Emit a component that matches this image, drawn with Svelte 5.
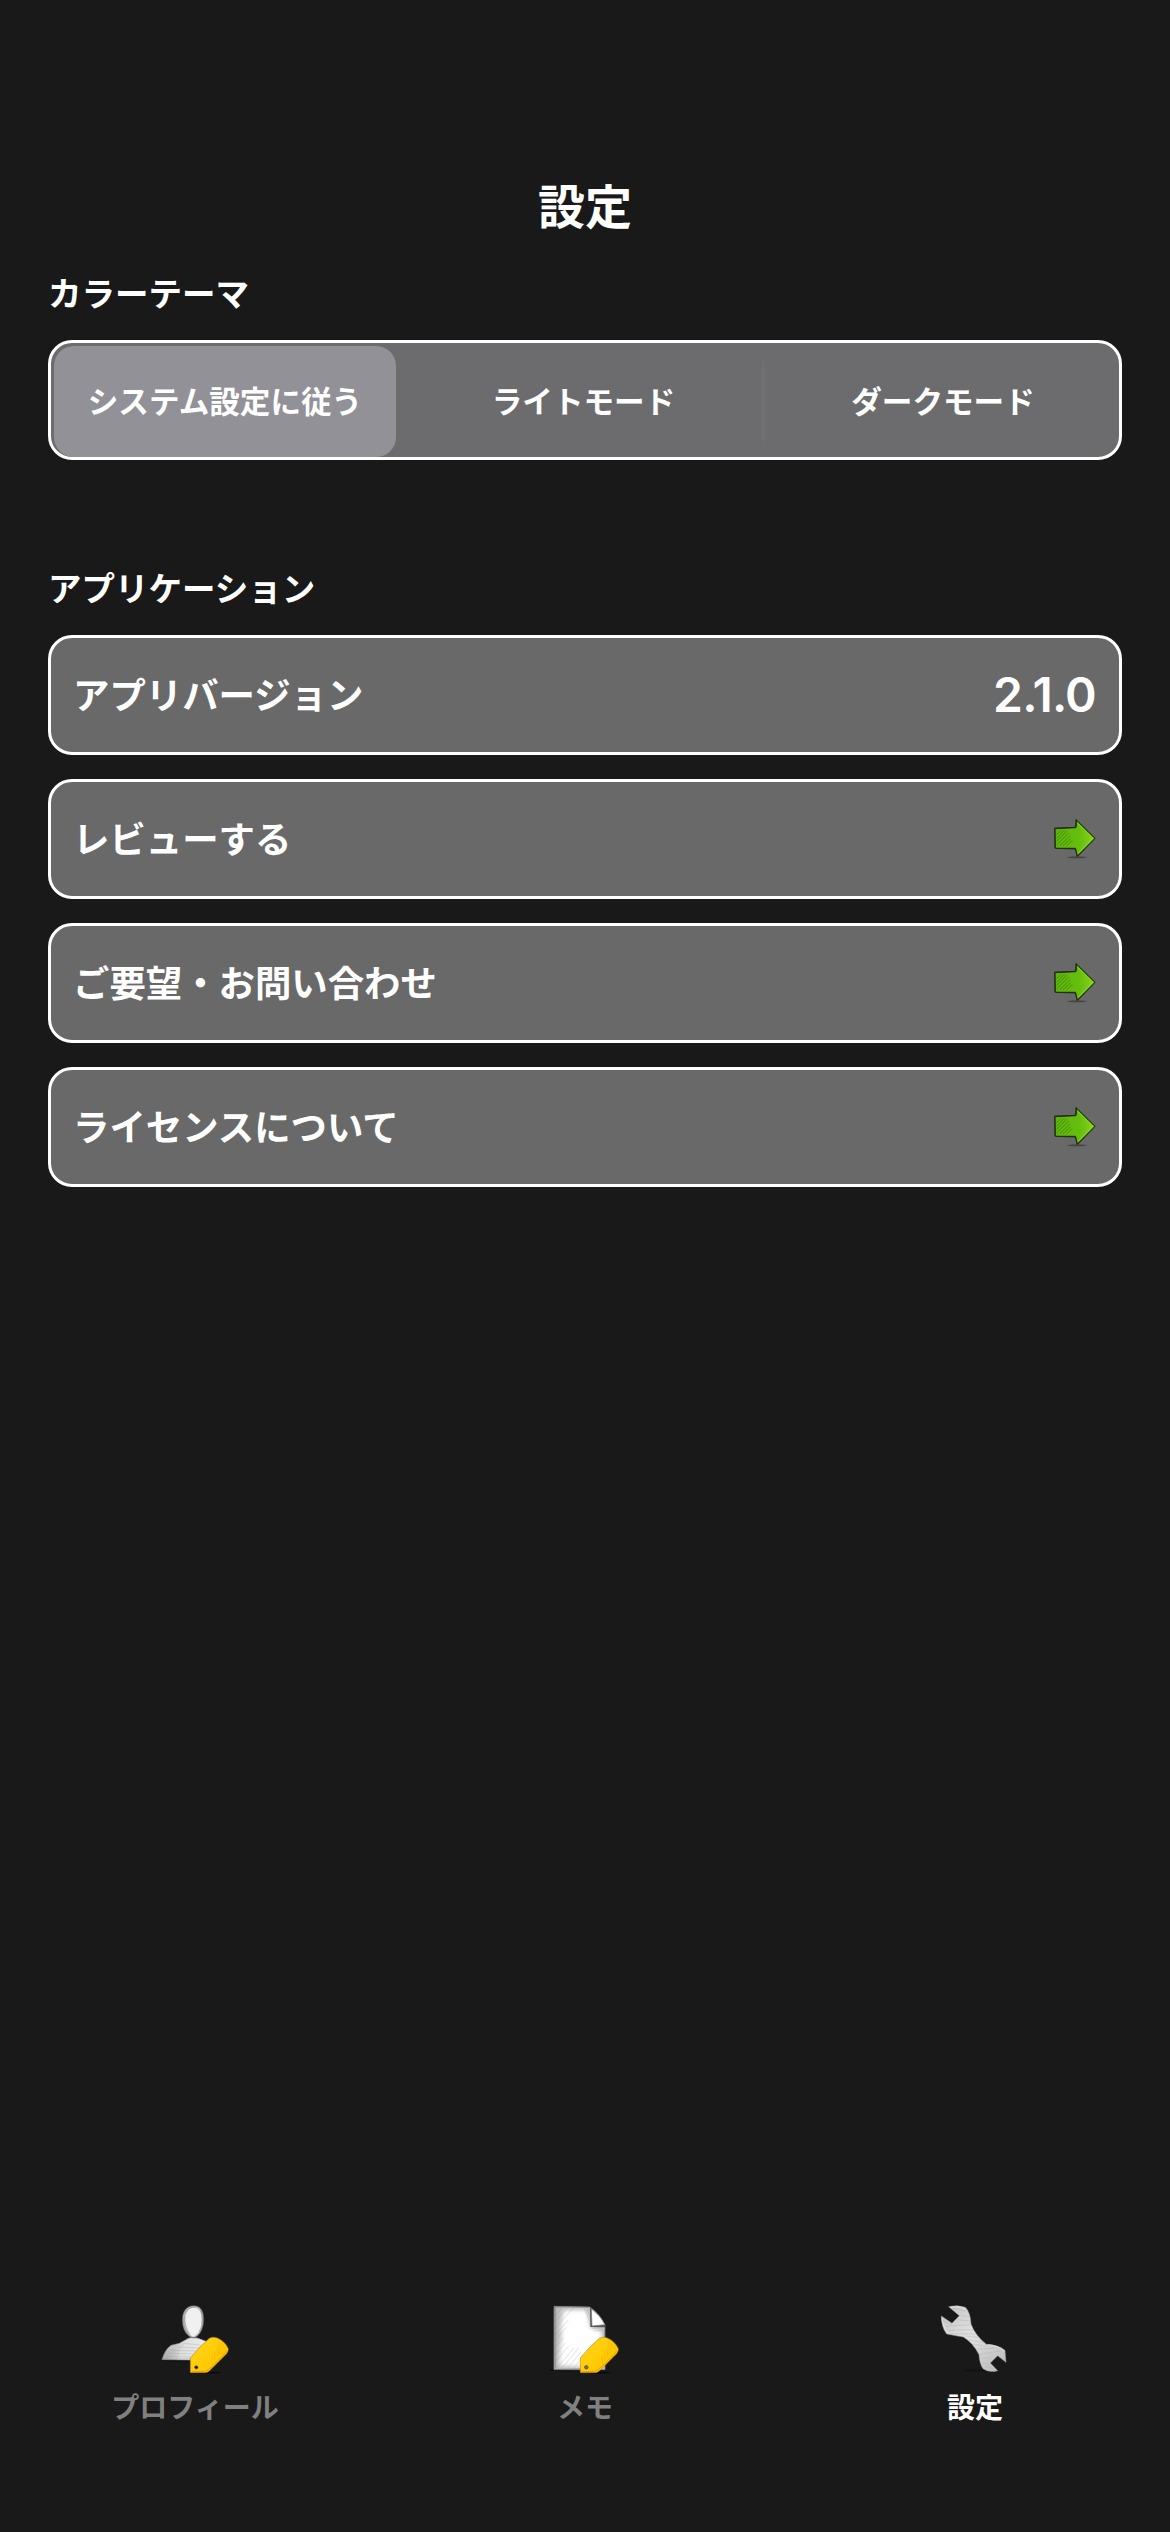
<script>
  const modes = ['システム設定に従う', 'ライトモード', 'ダークモード'];
  const links = ['レビューする', 'ご要望・お問い合わせ', 'ライセンスについて'];
  let selected = $state(0);
</script>

{#snippet tag()}
  <ellipse cx="165" cy="248" rx="48" ry="3" fill="#080808" />
  <path d="M121 204 Q148 170 178 145 Q187 139 200 143 Q225 153 235 176 Q236 184 230 191 L178 243 Q172 248 166 248 L121 248 Z" fill="url(#tagFill)" stroke="#a87508" stroke-width="1.5" />
  <path d="M125 245 L164 244 Q174 242 185 230 L231 184" fill="none" stroke="#e98c08" stroke-width="3" opacity=".75" />
  <g stroke="#e5a900" stroke-width="1.5" opacity=".7">
    <path d="M207 151 v42 M213 155 v39 M219 159 v34 M225 166 v25 M202 172 v31 M194 184 v28 M187 196 v26" />
  </g>
{/snippet}

<div class="screen">
  <header><h1>設定</h1></header>
  <main>
    <section class="theme">
      <h2>カラーテーマ</h2>
      <div class="segments">
        {#each modes as mode, i}
          <button class:selected={selected === i} class:divided={i === 2} onclick={() => (selected = i)}><span>{mode}</span></button>
        {/each}
      </div>
    </section>
    <section>
      <h2>アプリケーション</h2>
      <div class="rows">
        <div class="row"><span class="label">アプリバージョン</span><span class="version">2.1.0</span></div>
        {#each links as link}
          <div class="row">
            <span class="label">{link}</span>
            <svg class="arrow" viewBox="39 54 126 126">
              <ellipse cx="108" cy="172" rx="29" ry="3" fill="#333" opacity=".65" />
              <path d="M42 86 L103 83 L105 59 L162 115 L109 169 L103 145 L43 144 Z" fill="url(#arrowFill)" stroke="#253b13" stroke-width="3.5" stroke-linejoin="round" />
              <path d="M40 84 L104 82 M41 85 L42 145 M43 145 L103 147 M106 59 L107 82 M104 146 L108 168 M110 168 L133 146" fill="none" stroke="#20291a" stroke-width="3" opacity=".85" />
              <path d="M46 105 L62 89 M46 115 L71 90 M46 125 L78 93 M47 135 L83 99 M56 138 L88 106 M66 138 L88 116 M77 138 L93 122" stroke="#2c6a08" stroke-width="1.8" opacity=".75" />
              <path d="M110 70 L155 114 L113 158" fill="none" stroke="#8ed431" stroke-width="3" opacity=".8" />
            </svg>
          </div>
        {/each}
      </div>
    </section>
  </main>
  <nav>
    <div class="tab">
      <svg class="icon" viewBox="0 0 270 270">
        <defs>
          <filter id="soft" x="-20%" y="-20%" width="140%" height="140%"><feGaussianBlur stdDeviation="6" /></filter>
          <linearGradient id="tagFill" x1="0" y1="0" x2="1" y2="1">
            <stop offset="0" stop-color="#ffd51d" /><stop offset=".7" stop-color="#ffc900" /><stop offset="1" stop-color="#e99000" />
          </linearGradient>
          <linearGradient id="arrowFill">
            <stop offset="0" stop-color="#5db50c" /><stop offset=".6" stop-color="#66be0c" /><stop offset="1" stop-color="#86d421" />
          </linearGradient>
          <linearGradient id="bodyFill">
            <stop offset="0" stop-color="#aaa" /><stop offset=".4" stop-color="#dedede" /><stop offset="1" stop-color="#ededed" />
          </linearGradient>
          <linearGradient id="steel" x1="0" y1="0" x2="1" y2="1">
            <stop offset="0" stop-color="#c4c4c4" /><stop offset=".45" stop-color="#e0e0e0" /><stop offset="1" stop-color="#b9b9b9" />
          </linearGradient>
        </defs>
        <ellipse cx="90" cy="211" rx="58" ry="4" fill="#0c0c0c" />
        <path d="M36 209 Q45 178 63 166 L88 160 L115 145 Q128 139 145 145 L174 156 L174 211 Z" fill="url(#bodyFill)" stroke="#828282" stroke-width="2" />
        <path d="M44 207 L79 164 M51 207 L88 163 M60 207 L96 161 M69 207 L105 158 M78 207 L87 190 M43 205 H150 M50 199 L145 201 M60 190 L143 192 M62 181 L148 183 M80 171 L153 174 M98 160 L152 165" stroke="#888" stroke-width="1.2" opacity=".6" />
        <path d="M131 47 C153 47 162 65 161 91 C160 120 146 142 130 144 C109 139 97 118 97 90 C97 63 110 47 131 47Z" fill="#b8b8b8" stroke="#555" stroke-width="2" />
        <path d="M130 53 C148 52 157 69 156 94 C154 119 142 137 129 140 C113 131 105 111 105 89 C106 67 115 54 130 53Z" fill="#f0f0f0" />
        <path d="M103 72 Q116 50 137 50 M99 82 Q98 111 115 133 M104 79 Q104 109 119 132 M154 61 Q165 92 148 125 M151 58 Q157 74 155 103" fill="none" stroke="#868686" stroke-width="1.4" />
        {@render tag()}
        <circle cx="139" cy="232" r="5" fill="#171717" stroke="#705318" stroke-width="2" />
      </svg>
      <span>プロフィール</span>
    </div>
    <div class="tab">
      <svg class="icon" viewBox="0 0 270 270">
        <ellipse cx="112" cy="240" rx="86" ry="4" fill="#0b0b0b" />
        <path d="M42 49 L149 51 Q183 74 195 108 L195 239 L42 239Z" fill="#bdbdbd" stroke="#888" stroke-width="2" />
        <path d="M70 60 L138 60 Q147 78 149 114 L184 122 L188 226 L160 232 L58 228 Q58 180 64 145 L62 105Z" fill="#fff" filter="url(#soft)" />
        <path d="M85 78 L132 70 L142 118 L180 132 L130 190 L80 190Z" fill="#fff" filter="url(#soft)" />
        <path d="M43 80 L67 52 M43 98 L84 52 M44 116 L101 53 M45 136 L85 90 M46 151 L79 112 M45 172 L71 143 M46 194 L76 159 M46 217 L85 169 M49 236 L102 174 M65 236 L116 174 M82 236 L123 185 M100 236 L135 192 M46 235 L158 236 M132 55 L148 92 M141 57 L150 83 M157 116 L193 113 M160 123 L193 121" stroke="#999" stroke-width="1.3" opacity=".65" />
        <path d="M43 51 L42 238 M47 50 L47 236 M42 51 L148 52 M42 239 L121 237 M194 117 L193 155" stroke="#666" stroke-width="1.7" opacity=".8" />
        <path d="M150 52 L151 111 L195 112 L196 104Z" fill="#555" />
        <path d="M154 57 Q180 75 195 104 L156 108Z" fill="#fff" stroke="#777" stroke-width="2" />
        {@render tag()}
        <circle cx="139" cy="232" r="5" fill="#777" stroke="#5e4a21" stroke-width="3" />
      </svg>
      <span>メモ</span>
    </div>
    <div class="tab active">
      <svg class="icon" viewBox="0 0 270 270">
        <ellipse cx="150" cy="241" rx="50" ry="3" fill="#0e0e0e" opacity=".7" />
        <path d="M56 50 Q84 43 106 52 Q121 66 123 102 Q136 137 169 163 Q204 164 225 181 L228 217 L203 197 L181 219 L203 242 Q180 249 160 237 Q149 224 147 194 Q130 159 100 141 Q75 137 50 132 Q34 112 34 78 L66 100 L88 77Z" fill="url(#steel)" stroke="#9c9c9c" stroke-width="1.5" />
        <path d="M70 55 L105 63 M93 76 L117 80 M88 90 L122 94 M38 92 L65 105 M47 109 L121 104 M52 121 L129 119 M62 131 L136 132 M105 138 L149 143 M117 150 L160 157 M126 162 L172 169 M139 178 L195 174 M149 193 L209 183 M153 205 L182 204 M157 219 L177 221 M164 230 L184 232" stroke="#aaa" stroke-width="1.6" opacity=".65" />
        <path d="M60 52 Q90 46 107 58 M35 83 Q41 116 54 129 M174 164 Q209 167 223 184" fill="none" stroke="#ededed" stroke-width="2" />
      </svg>
      <span>設定</span>
    </div>
  </nav>
</div>

<style>
  :global(body) { margin: 0; background: #191919; }
  .screen {
    box-sizing: border-box;
    width: 1170px;
    height: 2532px;
    display: flex;
    flex-direction: column;
    padding-top: 165px;
    background: #191919;
    color: #fff;
    font-family: 'Noto Sans CJK JP', sans-serif;
    font-weight: 700;
  }
  h1, h2 { margin: 0; font-weight: 700; }
  header { height: 81px; text-align: center; }
  h1 { font-size: 47px; line-height: 78px; }
  main { flex: 1; padding: 19px 48px 0; }
  h2 { height: 54px; margin-bottom: 21px; font-size: 33.5px; line-height: 54px; }
  .theme { margin-bottom: 100px; }
  .segments {
    box-sizing: border-box;
    height: 120px;
    padding: 3px 0 0 3px;
    display: grid;
    grid-template-columns: 351px 357px 1fr;
    border: 3px solid #fff;
    border-radius: 24px;
    background: #6c6c6e;
  }
  .segments button {
    position: relative;
    padding: 0 0 4px;
    border: 0;
    border-radius: 20px;
    background: transparent;
    color: inherit;
    font: inherit;
    font-size: 30.6px;
    line-height: 44px;
    white-space: nowrap;
  }
  .segments button:first-child { margin-right: 9px; }
  .segments .selected { background: #929197; }
  .segments .divided { padding-left: 5px; }
  .segments .divided::before {
    content: '';
    position: absolute;
    left: 0;
    top: 15px;
    width: 3px;
    height: 80px;
    background: #707072;
  }
  .rows { display: grid; gap: 24px; }
  .row {
    box-sizing: border-box;
    height: 120px;
    padding: 0 23px 0 22px;
    display: flex;
    align-items: center;
    justify-content: space-between;
    border: 3px solid #fff;
    border-radius: 24px;
    background: #696969;
    font-size: 36.4px;
    line-height: 54px;
  }
  .label { padding-bottom: 4px; }
  .version { font-family: Inter, sans-serif; font-size: 48px; font-weight: 600; letter-spacing: -.8px; }
  .arrow { width: 42px; height: 42px; }
  nav { height: 242px; display: grid; grid-template-columns: repeat(3, 1fr); }
  .tab { display: flex; flex-direction: column; align-items: center; color: #808080; font-size: 28px; line-height: 40px; }
  .active { color: #fff; }
  .icon { width: 90px; height: 90px; margin-bottom: 6px; }
</style>
